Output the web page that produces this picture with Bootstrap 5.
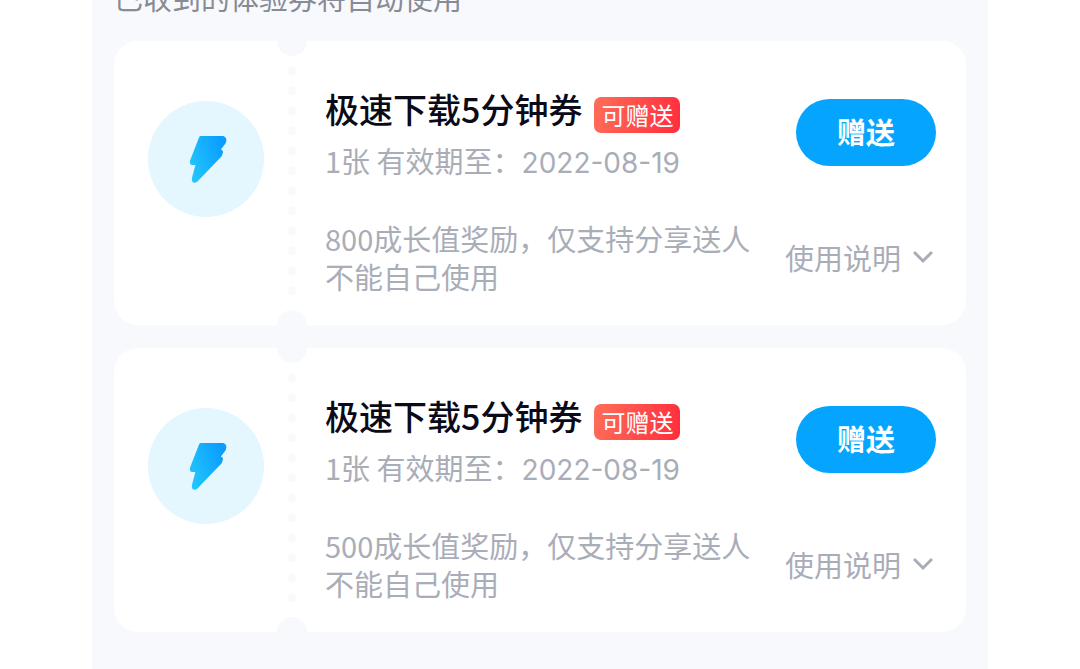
<!DOCTYPE html>
<html lang="zh-CN">
<head>
<meta charset="utf-8">
<meta name="viewport" content="width=device-width, initial-scale=1">
<title>体验券</title>
<link href="https://cdn.jsdelivr.net/npm/bootstrap@5.3.0/dist/css/bootstrap.min.css" rel="stylesheet">
<style>
  :root { --panel: #f7f9fd; --muted: #a9adb8; }
  body { font-family: "Noto Sans CJK SC", sans-serif; font-size: 29px; line-height: 38px; background: #fff; color: var(--muted); }
  .panel { max-width: 896px; min-height: 100vh; background: var(--panel); padding: 0 22px 38px; overflow: hidden; }
  .hint { color: #878b95; margin: -22px 0 25px; }
  .coupon-list { gap: 23px; }
  .coupon { background: #fff; border-radius: 24px; overflow: hidden; }
  .coupon-icon { width: 178px; padding: 60px 0 0 34px; }
  .coupon-icon svg { width: 116px; height: 116px; }
  /* perforated line with a half-round notch at each end */
  .coupon-icon::before, .coupon-icon::after { content: ""; position: absolute; right: -15px; width: 30px; height: 30px; border-radius: 50%; background: var(--panel); }
  .coupon-icon::before { top: -15px; }
  .coupon-icon::after { bottom: -15px; }
  .perforation { position: absolute; right: -5px; top: 20px; bottom: 18px; width: 10px; background: radial-gradient(circle, #f8fafd 4px, transparent 5px) 0 0 / 10px 20px repeat-y; }
  .coupon-main { padding: 44px 24px 30px 33px; }
  .coupon-title { font-size: 34px; line-height: 48px; font-weight: 500; color: #0a0a18; gap: 12px; }
  .tag { font-size: 24px; line-height: 36px; padding: 0 7px; color: #fff; font-weight: 400; border-radius: 7px; background: linear-gradient(100deg, #ff6e58, #ff2d3e); }
  .date { font-family: Inter, sans-serif; font-size: 28px; line-height: 1; }
  .desc { margin-top: 40px; }
  .coupon-side { width: 180px; padding: 58px 30px 0 0; }
  .btn-gift { width: 140px; height: 67px; padding: 0 0 2px; font-size: 29px; font-weight: 700; color: #fff; background: #05a5ff; border: 0; }
  .btn-gift:hover { color: #fff; background: #0498ec; }
  .btn-usage { padding: 0 3px 0 0; margin-top: 72px; font-size: 29px; line-height: 38px; color: var(--muted); border: 0; gap: 12px; }
  .btn-usage svg { width: 20px; height: 14px; }
</style>
</head>
<body>
<svg class="position-absolute" width="0" height="0" aria-hidden="true">
  <defs>
    <linearGradient id="boltFill" gradientUnits="userSpaceOnUse" x1="42" y1="64" x2="78" y2="50">
      <stop offset="0" stop-color="#22c4fb"/><stop offset="1" stop-color="#0a9cff"/>
    </linearGradient>
  </defs>
</svg>
<main class="panel mx-auto">
  <p class="hint">已收到的体验券将自动使用</p>
  <div class="coupon-list d-flex flex-column">

    <article class="coupon d-flex">
      <div class="coupon-icon position-relative flex-shrink-0">
        <svg class="d-block" viewBox="0 0 116 116" aria-hidden="true"><circle cx="58" cy="58" r="58" fill="#e4f6fe"/><path d="M53 37H75Q77 38 76 41L70 49L73 51L72 54L48 79Q45 81 46 77L50 62H44L44 60Z" fill="url(#boltFill)" stroke="url(#boltFill)" stroke-width="4" stroke-linejoin="round"/></svg>
        <span class="perforation"></span>
      </div>
      <div class="coupon-main flex-grow-1">
        <h2 class="coupon-title d-flex align-items-end mb-2">极速下载5分钟券<span class="tag">可赠送</span></h2>
        <p class="mb-0">1张 有效期至：<span class="date">2022-08-19</span></p>
        <p class="desc mb-0">800成长值奖励，仅支持分享送人不能自己使用</p>
      </div>
      <div class="coupon-side d-flex flex-column align-items-end flex-shrink-0">
        <button type="button" class="btn btn-gift rounded-pill">赠送</button>
        <button type="button" class="btn btn-usage d-flex align-items-center text-nowrap">使用说明<svg viewBox="0 0 20 14" fill="none" stroke="currentColor" stroke-width="3" aria-hidden="true"><path d="M1 2L10 11L19 2"/></svg></button>
      </div>
    </article>

    <article class="coupon d-flex">
      <div class="coupon-icon position-relative flex-shrink-0">
        <svg class="d-block" viewBox="0 0 116 116" aria-hidden="true"><circle cx="58" cy="58" r="58" fill="#e4f6fe"/><path d="M53 37H75Q77 38 76 41L70 49L73 51L72 54L48 79Q45 81 46 77L50 62H44L44 60Z" fill="url(#boltFill)" stroke="url(#boltFill)" stroke-width="4" stroke-linejoin="round"/></svg>
        <span class="perforation"></span>
      </div>
      <div class="coupon-main flex-grow-1">
        <h2 class="coupon-title d-flex align-items-end mb-2">极速下载5分钟券<span class="tag">可赠送</span></h2>
        <p class="mb-0">1张 有效期至：<span class="date">2022-08-19</span></p>
        <p class="desc mb-0">500成长值奖励，仅支持分享送人不能自己使用</p>
      </div>
      <div class="coupon-side d-flex flex-column align-items-end flex-shrink-0">
        <button type="button" class="btn btn-gift rounded-pill">赠送</button>
        <button type="button" class="btn btn-usage d-flex align-items-center text-nowrap">使用说明<svg viewBox="0 0 20 14" fill="none" stroke="currentColor" stroke-width="3" aria-hidden="true"><path d="M1 2L10 11L19 2"/></svg></button>
      </div>
    </article>

  </div>
</main>
</body>
</html>
